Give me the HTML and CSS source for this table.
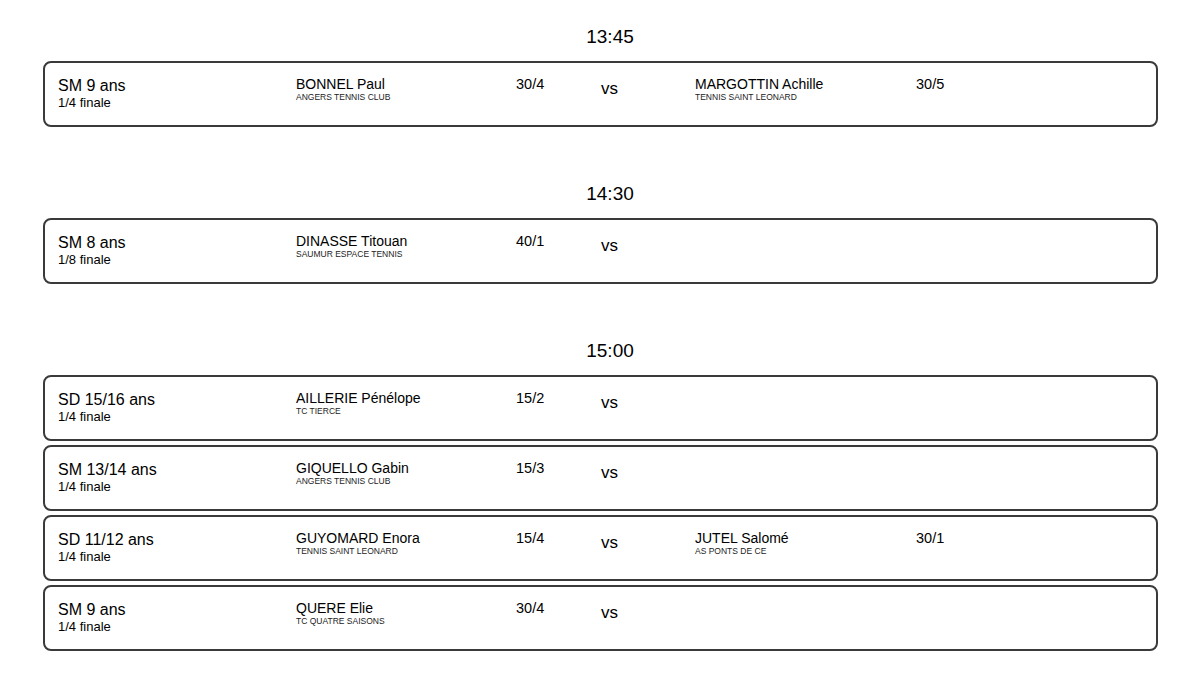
FILE: index.html
```html
<!DOCTYPE html>
<html lang="fr">
<head>
<meta charset="utf-8">
<title>Programme</title>
<link rel="stylesheet" href="styles.css">
</head>
<body>
<main class="page">
  <section class="slot">
    <h2 class="time">13:45</h2>
    <div class="matches">
      <div class="match">
        <div class="cat"><div class="cat-name">SM 9 ans</div><div class="round">1/4 finale</div></div>
        <div class="player"><div class="pname">BONNEL Paul</div><div class="club">ANGERS TENNIS CLUB</div></div>
        <div class="rank">30/4</div>
        <div class="vs">vs</div>
        <div class="player"><div class="pname">MARGOTTIN Achille</div><div class="club">TENNIS SAINT LEONARD</div></div>
        <div class="rank">30/5</div>
      </div>
    </div>
  </section>
  <section class="slot">
    <h2 class="time">14:30</h2>
    <div class="matches">
      <div class="match">
        <div class="cat"><div class="cat-name">SM 8 ans</div><div class="round">1/8 finale</div></div>
        <div class="player"><div class="pname">DINASSE Titouan</div><div class="club">SAUMUR ESPACE TENNIS</div></div>
        <div class="rank">40/1</div>
        <div class="vs">vs</div>
        <div class="player"></div>
        <div class="rank"></div>
      </div>
    </div>
  </section>
  <section class="slot">
    <h2 class="time">15:00</h2>
    <div class="matches">
      <div class="match">
        <div class="cat"><div class="cat-name">SD 15/16 ans</div><div class="round">1/4 finale</div></div>
        <div class="player"><div class="pname">AILLERIE Pénélope</div><div class="club">TC TIERCE</div></div>
        <div class="rank">15/2</div>
        <div class="vs">vs</div>
        <div class="player"></div>
        <div class="rank"></div>
      </div>
      <div class="match">
        <div class="cat"><div class="cat-name">SM 13/14 ans</div><div class="round">1/4 finale</div></div>
        <div class="player"><div class="pname">GIQUELLO Gabin</div><div class="club">ANGERS TENNIS CLUB</div></div>
        <div class="rank">15/3</div>
        <div class="vs">vs</div>
        <div class="player"></div>
        <div class="rank"></div>
      </div>
      <div class="match">
        <div class="cat"><div class="cat-name">SD 11/12 ans</div><div class="round">1/4 finale</div></div>
        <div class="player"><div class="pname">GUYOMARD Enora</div><div class="club">TENNIS SAINT LEONARD</div></div>
        <div class="rank">15/4</div>
        <div class="vs">vs</div>
        <div class="player"><div class="pname">JUTEL Salomé</div><div class="club">AS PONTS DE CE</div></div>
        <div class="rank">30/1</div>
      </div>
      <div class="match">
        <div class="cat"><div class="cat-name">SM 9 ans</div><div class="round">1/4 finale</div></div>
        <div class="player"><div class="pname">QUERE Elie</div><div class="club">TC QUATRE SAISONS</div></div>
        <div class="rank">30/4</div>
        <div class="vs">vs</div>
        <div class="player"></div>
        <div class="rank"></div>
      </div>
    </div>
  </section>
</main>
</body>
</html>
```

FILE: styles.css
```css
* { box-sizing: border-box; }
html, body { margin: 0; padding: 0; background: #fff; }
body {
  font-family: "Liberation Sans", Arial, sans-serif;
  color: #000;
}
.page {
  width: 1115px;
  margin-left: 43px;
  padding-top: 25px;
}
.slot + .slot { margin-top: 55px; }
.time {
  margin: 0 0 12px 0;
  padding-left: 19px;
  text-align: center;
  font-size: 19px;
  line-height: 24px;
  font-weight: normal;
}
.matches {
  display: flex;
  flex-direction: column;
  gap: 4px;
}
.match {
  height: 66px;
  border: 2px solid #3a3a3a;
  border-radius: 8px;
  padding: 13px 0 0 13px;
  display: grid;
  grid-template-columns: 238px 220px 85px 94px 221px 1fr;
  align-items: start;
}
.cat { padding-top: 1px; }
.cat-name { font-size: 16px; line-height: 18px; }
.round { font-size: 13px; line-height: 15px; }
.pname { font-size: 14px; line-height: 16px; }
.club { font-size: 8.5px; line-height: 10px; color: #222; }
.rank { font-size: 14.5px; line-height: 16px; }
.vs { font-size: 17px; line-height: 20px; padding-top: 3px; }
```
